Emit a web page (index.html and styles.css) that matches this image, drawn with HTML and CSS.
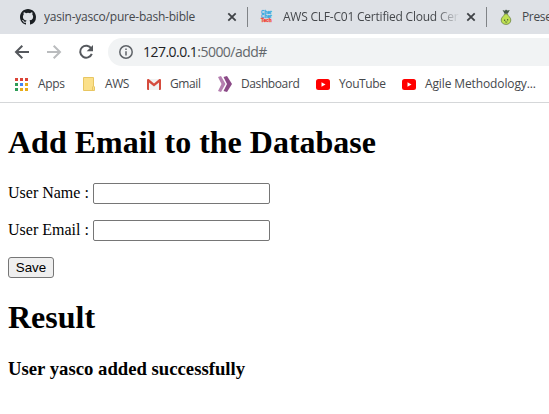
FILE: index.html
```html
<!DOCTYPE html>
<html lang="en">
<head>
<meta charset="utf-8">
<title>Add Email</title>
<link rel="stylesheet" href="styles.css">
</head>
<body>
<div class="tabs">
  <div class="tab tab-first">
    <svg class="favicon" viewBox="0 0 16 16"><path fill="#1b1f23" d="M8 0C3.58 0 0 3.58 0 8c0 3.54 2.29 6.53 5.47 7.59.4.07.55-.17.55-.38 0-.19-.01-.82-.01-1.49-2.01.37-2.53-.49-2.69-.94-.09-.23-.48-.94-.82-1.13-.28-.15-.68-.52-.01-.53.63-.01 1.08.58 1.23.82.72 1.21 1.87.87 2.33.66.07-.52.28-.87.51-1.07-1.78-.2-3.64-.89-3.64-3.95 0-.87.31-1.59.82-2.15-.08-.2-.36-1.02.08-2.12 0 0 .67-.21 2.2.82a7.42 7.42 0 0 1 4 0c1.53-1.04 2.2-.82 2.2-.82.44 1.1.16 1.92.08 2.12.51.56.82 1.27.82 2.15 0 3.07-1.87 3.75-3.65 3.95.29.25.54.73.54 1.48 0 1.07-.01 1.93-.01 2.2 0 .21.15.46.55.38A8.01 8.01 0 0 0 16 8c0-4.42-3.58-8-8-8z"/></svg>
    <span class="title t1">yasin-yasco/pure-bash-bible</span>
    <svg class="close" viewBox="0 0 10 10"><path d="M1.3 1.3l7.4 7.4M8.7 1.3L1.3 8.7"/></svg>
  </div>
  <div class="tab tab-second">
    <div class="favicon cher"><b>Cher</b><b>Cher</b><b class="red">Tech</b></div>
    <span class="title t2">AWS CLF-C01 Certified Cloud Cer</span>
    <svg class="close" viewBox="0 0 10 10"><path d="M1.3 1.3l7.4 7.4M8.7 1.3L1.3 8.7"/></svg>
  </div>
  <div class="tab tab-third">
    <svg class="favicon" viewBox="0 0 16 16"><path d="M6.600 5C6 7.200 3.200 8.200 3.200 11c0 2.800 2 4.400 4.800 4.400s4.800-1.600 4.800-4.400C12.800 8.200 10 7.200 9.400 5z" fill="#bfe052" stroke="#6d8544" stroke-width=".8"/><path d="M4.500 1l2.300.7L8 .6l1.300 1 2.500-.6-1.400 2.500L9.500 4.800h-3L5.700 3z" fill="#46594a"/><path d="M6 10.500h1.200v1.500H6zM9 10h1.200v1.500H9z" fill="#53683a"/><path d="M7.200 12.800q1.200.7 2 0" fill="none" stroke="#53683a"/></svg>
    <span class="title t3">Prese</span>
  </div>
</div>
<div class="toolbar">
  <svg class="nav" viewBox="0 0 16 16"><path d="M15 8H2.500M8.300 1.700L2 8L8.300 14.300"/></svg>
  <svg class="nav off" viewBox="0 0 16 16"><path d="M1 8h12.500M7.700 1.700L14 8L7.700 14.300"/></svg>
  <svg class="nav" viewBox="0 0 16 16"><path d="M13.300 4.500A6 6 0 1 0 13.800 9.800"/><path class="solid" d="M15 1v6.300H8.700z"/></svg>
  <div class="omnibox">
    <svg class="info" viewBox="0 0 14 14"><circle cx="7" cy="7" r="6.200"/><path d="M7 6.200v4.300M7 3.500v1.500"/></svg>
    <span class="url">127.0.0.1<span class="path">:5000/add#</span></span>
  </div>
</div>
<div class="bookmarks">
  <svg class="bi apps" viewBox="0 0 13 13"><path fill="#db4437" d="M0 0h3v3H0zM5 0h3v3H5zM10 0h3v3h-3z"/><path fill="#2f9d58" d="M0 5h3v3H0zM0 10h3v3H0z"/><path fill="#4285f4" d="M5 5h3v3H5z"/><path fill="#e8ac18" d="M10 5h3v3h-3zM5 10h3v3H5zM10 10h3v3h-3z"/></svg>
  <span class="bm b1">Apps</span>
  <svg class="bi folder" viewBox="0 0 12 14"><path d="M.5.500h10V9l1 1v3.500H.5z" fill="#fbe08a" stroke="#e8c662"/><path d="M9.500 13V10l1-1" fill="none" stroke="#e8c662"/></svg>
  <span class="bm b2">AWS</span>
  <svg class="bi gmail" viewBox="0 0 14 11"><path fill="#f2f2f2" d="M1 0h12v11H1z"/><path fill="#d54b3d" d="M0 1Q0 0 1 0h.7L7 4.400 12.300 0h.7q1 0 1 1v9q0 1-1 1h-1V3.500L7 7.500l-5-4V11H1q-1 0-1-1z"/></svg>
  <span class="bm b3">Gmail</span>
  <svg class="bi dash" viewBox="0 0 14 16"><path fill="#b57fb0" d="M0 1l3-1 4.500 8L3 16l-3-1 3.500-7z"/><path fill="#8b4a87" d="M5.500 1L9 0l5 8-5 8-3.500-1L9 8z"/></svg>
  <span class="bm b4">Dashboard</span>
  <svg class="bi yt" viewBox="0 0 14 11"><rect width="14" height="11" rx="2.500" fill="#f00"/><path fill="#fff" d="M5.500 3.200v4.600l4-2.300z"/></svg>
  <span class="bm b5">YouTube</span>
  <svg class="bi yt" viewBox="0 0 14 11"><rect width="14" height="11" rx="2.500" fill="#f00"/><path fill="#fff" d="M5.500 3.200v4.600l4-2.300z"/></svg>
  <span class="bm b6">Agile Methodology...</span>
</div>
<main class="page">
  <h1>Add Email to the Database</h1>
  <form>
    <div class="field"><label for="name">User Name :</label><input id="name" type="text"></div>
    <div class="field"><label for="email">User Email :</label><input id="email" type="text"></div>
    <button type="button">Save</button>
  </form>
  <h1>Result</h1>
  <h3>User yasco added successfully</h3>
</main>
</body>
</html>
```
FILE: styles.css
```css
* { box-sizing: border-box; }
body { margin: 0; background: #fff; overflow: hidden; height: 414px; font-family: "Liberation Serif", serif; }
svg { display: block; flex: none; }

.tabs { display: flex; width: 549px; height: 34px; background: #dee1e6; overflow: hidden; font: 12px/16px "Open Sans", sans-serif; color: #45484c; }
.tab { display: flex; flex: none; align-items: center; position: relative; }
.tab-first { width: 247px; padding-left: 20px; }
.tab-second { width: 239px; padding-left: 12px; }
.tab-third { width: 63px; padding-left: 12px; }
.tab + .tab::before { content: ""; position: absolute; left: 0; top: 7px; width: 1px; height: 20px; background: #808387; }
.favicon { width: 16px; height: 16px; flex: none; }
.title { white-space: nowrap; overflow: hidden; flex: none; margin-left: 8px; letter-spacing: -.22px; }
.t1 { width: 175px; }
.t2 { width: 176px; -webkit-mask-image: linear-gradient(90deg, #000 152px, transparent 177px); mask-image: linear-gradient(90deg, #000 152px, transparent 177px); }
.t3 { letter-spacing: -.35px; }
.close { width: 10px; height: 10px; margin-left: 8px; }
.t2 + .close { margin-left: 7px; }
.close path { stroke: #3f4246; stroke-width: 1.8; fill: none; }
.cher { display: flex; flex-direction: column; justify-content: center; padding-left: 2px; font: 4.7px/4px "Liberation Sans", sans-serif; color: #36a9e0; -webkit-text-stroke: .3px currentColor; }
.cher b { height: 4px; }
.cher .red { color: #ef4a3c; }

.toolbar { display: flex; align-items: center; height: 36px; padding-left: 14px; }
.nav { width: 16px; height: 16px; margin-right: 16px; }
.nav path { fill: none; stroke: #55585d; stroke-width: 2; }
.nav .solid { fill: #55585d; stroke: none; }
.nav.off path { stroke: #babcbe; }
.omnibox { display: flex; align-items: center; width: 460px; flex: none; height: 28px; margin-left: -2px; padding-left: 11px; border-radius: 14px; background: #f1f3f4; }
.info { width: 14px; height: 14px; }
.info circle, .info path { fill: none; stroke: #5f6368; stroke-width: 1.5; }
.url { margin-left: 10px; font: 14px/20px "Open Sans", sans-serif; letter-spacing: -.53px; color: #202124; white-space: nowrap; }
.path { color: #63676b; }

.bookmarks { display: flex; align-items: center; height: 33px; padding: 0 0 4px 15px; border-bottom: 1px solid #d5d7d9; font: 12px/16px "Open Sans", sans-serif; color: #45484c; }
.bm { flex: none; white-space: nowrap; letter-spacing: -.4px; }
.apps { width: 13px; height: 13px; margin-right: 10px; }
.folder { width: 12px; height: 14px; margin-right: 10px; }
.gmail { width: 14px; height: 11px; margin-right: 9px; }
.dash { width: 14px; height: 16px; margin-right: 9px; }
.yt { width: 14px; height: 11px; margin-right: 9px; }
.b1 { width: 45px; letter-spacing: -.3px; }
.b2 { width: 42px; }
.b3 { width: 48px; }
.b4 { width: 75px; }
.b5 { width: 63px; }
.b6 { letter-spacing: -.12px; }

.page { display: flow-root; padding: 0 8px; color: #000; }
h1 { margin: 21.44px 0; font-size: 32px; line-height: 37px; }
h3 { margin: 0; font-size: 18.72px; line-height: 21px; }
.field { display: flex; align-items: center; height: 21px; margin-bottom: 16px; font-size: 16px; line-height: 18px; }
label { width: 85px; white-space: nowrap; }
input { width: 177px; height: 21px; border: 1px solid #767676; border-radius: 2px; background: #fff; }
button { display: block; width: 46px; height: 21px; padding: 1px 0 0; border: 1px solid #767676; border-radius: 3px; background: #efefef; color: #000; font: 13.333px/18px "Liberation Sans", sans-serif; }
```
